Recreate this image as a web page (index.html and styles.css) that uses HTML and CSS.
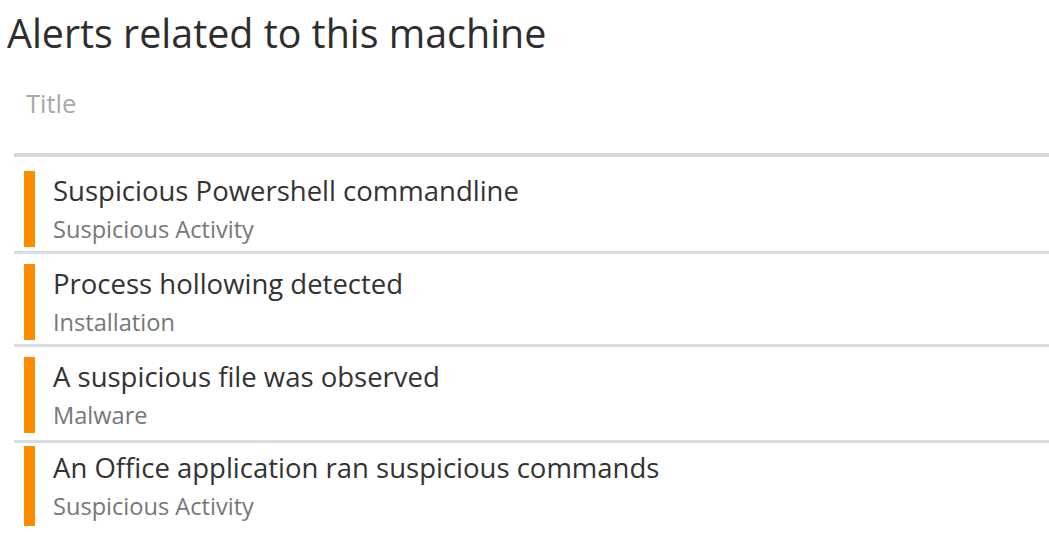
FILE: index.html
```html
<!DOCTYPE html>
<html>
<head>
<meta charset="utf-8">
<link rel="stylesheet" href="styles.css">
</head>
<body>
<h1 class="page-title">Alerts related to this machine</h1>
<div class="alerts">
  <div class="alerts-head">Title</div>
  <div class="alert-row first">
    <span class="severity"></span>
    <div class="alert-text">
      <div class="alert-name">Suspicious Powershell commandline</div>
      <div class="alert-cat">Suspicious Activity</div>
    </div>
  </div>
  <div class="alert-row">
    <span class="severity"></span>
    <div class="alert-text">
      <div class="alert-name">Process hollowing detected</div>
      <div class="alert-cat">Installation</div>
    </div>
  </div>
  <div class="alert-row third">
    <span class="severity"></span>
    <div class="alert-text">
      <div class="alert-name">A suspicious file was observed</div>
      <div class="alert-cat">Malware</div>
    </div>
  </div>
  <div class="alert-row last">
    <span class="severity"></span>
    <div class="alert-text">
      <div class="alert-name">An Office application ran suspicious commands</div>
      <div class="alert-cat">Suspicious Activity</div>
    </div>
  </div>
</div>
</body>
</html>
```
FILE: styles.css
```css
html, body {
  margin: 0;
  padding: 0;
  background: #ffffff;
}
body {
  font-family: "Open Sans", "Noto Sans", sans-serif;
  width: 1049px;
  height: 550px;
  overflow: hidden;
}
.page-title {
  margin: 0;
  padding: 6px 0 0 7px;
  font-size: 39.4px;
  font-weight: 400;
  line-height: 54px;
  color: #2e2e2e;
}
.alerts {
  margin-left: 14px;
}
.alerts-head {
  padding: 26px 0 33px 12px;
  font-size: 25.5px;
  line-height: 34px;
  color: #a8a8a8;
  border-bottom: 4px solid #d3d8df;
}
.alert-row {
  display: flex;
  align-items: flex-start;
  padding: 10px 0 4px 10px;
  border-bottom: 3px solid #d8dce3;
}
.alert-row.first {
  padding-top: 14px;
}
.alert-row.third {
  padding-bottom: 7px;
}
.alert-row.last {
  border-bottom: none;
  padding-top: 3px;
}
.severity {
  width: 11px;
  height: 76px;
  background: #ff8c00;
  flex: none;
}
.alert-row.last .severity {
  height: 80px;
}
.alert-text {
  padding: 1px 0 0 18px;
  display: flex;
  flex-direction: column;
}
.alert-row.last .alert-text {
  padding-top: 3px;
}
.alert-name {
  font-size: 27.5px;
  line-height: 38px;
  color: #333333;
}
.alert-cat {
  margin-top: 2px;
  font-size: 23.6px;
  line-height: 34px;
  color: #777777;
}
```
